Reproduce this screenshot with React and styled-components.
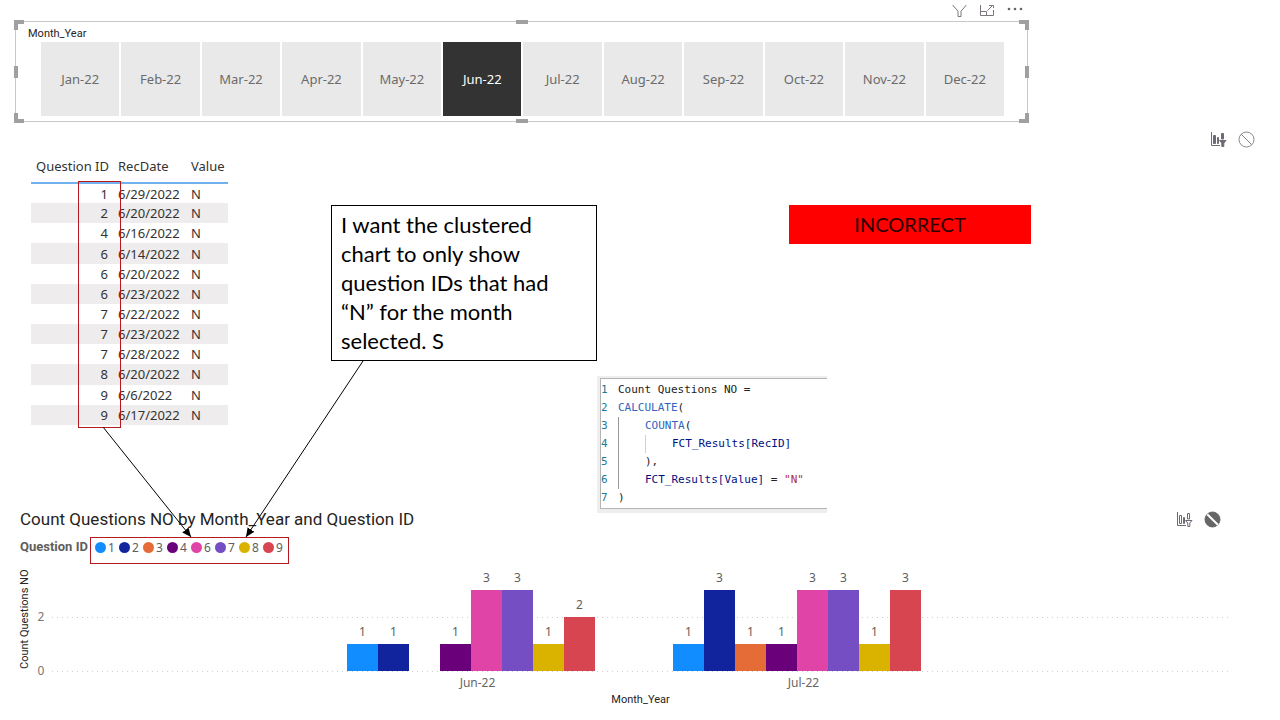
import React from 'react'
import { styled, createGlobalStyle } from 'styled-components'

const GlobalStyle = createGlobalStyle`
  body {
    margin: 0;
    background: #fff;
    font-family: 'Noto Sans', sans-serif;
  }
  * {
    box-sizing: border-box;
  }
`

const Page = styled.main`
  position: relative;
  min-height: 100vh;
`

const Toolbar = styled.div`
  display: flex;
  justify-content: flex-end;
  gap: ${p => p.$gap || 12}px;
`

const SlicerToolbar = styled(Toolbar)`
  padding: 2px 5px 2px 0;
`

const FilterToolbar = styled(Toolbar)`
  padding: 9px 25px 9px 0;
`

const IconButton = styled.button`
  display: flex;
  padding: 0;
  border: none;
  background: none;
  cursor: pointer;
`

const SlicerVisual = styled.section`
  margin: 0 252px 0 15px;
`

const SlicerFrame = styled.div`
  position: relative;
  padding: 3px 23px 5px 25px;
  border: 1px solid #c8c8c8;
`

const SlicerTitle = styled.h2`
  margin: 0 0 0 -13px;
  font: 400 11px/17px Roboto, sans-serif;
  color: #252423;
`

const Months = styled.div`
  display: grid;
  grid-template-columns: repeat(12, 1fr);
  gap: 2px;
`

const Month = styled.button`
  height: 74px;
  padding: 0;
  border: none;
  background: ${p => (p.$active ? '#333' : '#e9e9e9')};
  color: ${p => (p.$active ? '#fff' : '#6b6b6b')};
  font: 13px/20px 'Noto Sans', sans-serif;
  cursor: pointer;
`

const Corner = styled.span`
  position: absolute;
  width: 10px;
  height: 10px;
  border: 0 solid #a0a0a0;
  ${p => p.$v}: -2px;
  ${p => p.$h}: -2px;
  border-${p => p.$v}-width: 4px;
  border-${p => p.$h}-width: 4px;
`

const SideHandle = styled.span`
  position: absolute;
  top: calc(50% - 6px);
  ${p => p.$side}: -2px;
  width: 4px;
  height: 12px;
  background: #a0a0a0;
`

const EdgeHandle = styled.span`
  position: absolute;
  left: calc(50% - 6px);
  ${p => p.$side}: -2px;
  width: 12px;
  height: 4px;
  background: #a0a0a0;
`

const Middle = styled.div`
  display: grid;
  grid-template-columns: 300px 266px 192px 242px;
  row-gap: 15px;
  align-items: start;
  justify-content: start;
  padding: 0 31px;
`

const TableWrap = styled.div`
  position: relative;
  grid-row: 1 / 3;
  width: 197px;
`

const Table = styled.table`
  width: 100%;
  height: 268px;
  border-collapse: collapse;
  table-layout: fixed;
  font-size: 13px;
  line-height: 18px;
  color: #333;
`

const Th = styled.th`
  height: 26px;
  width: ${p => p.$width}px;
  padding: 0 5px 7px;
  border-bottom: 2px solid #73b1ee;
  font-weight: 400;
  text-align: ${p => (p.$num ? 'right' : 'left')};
  white-space: nowrap;
`

const Tr = styled.tr`
  &:nth-child(even) {
    background: #eeecec;
  }
`

const Td = styled.td`
  height: 20px;
  padding: 0 5px;
  text-align: ${p => (p.$num ? 'right' : 'left')};
`

const ColumnMark = styled.div`
  position: absolute;
  top: 24px;
  left: 47px;
  width: 43px;
  height: 247px;
  border: 1px solid #b5181d;
`

const Note = styled.p`
  margin: 48px 0 0;
  padding: 4px 9px 5px;
  border: 1px solid #000;
  background: #fff;
  font: 22px/29px Lato, sans-serif;
  color: #000;
`

const Verdict = styled.p`
  grid-column: 4;
  margin: 48px 0 0;
  padding: 5px 0;
  background: #f00;
  color: #2b0000;
  font: 20px/29px Lato, sans-serif;
  text-align: center;
`

const Editor = styled.div`
  grid-column: 3 / 5;
  width: 230px;
  padding: 2px 0 4px 3px;
  background: #efeeee;
`

const Code = styled.ol`
  margin: 0;
  padding: 2px 0 1px;
  border: 1px solid #b4b4b4;
  border-right: none;
  background: #fff;
  list-style: none;
  font: 11px/18px 'DejaVu Sans Mono', monospace;
  color: #222;
`

const CodeLine = styled.li`
  display: flex;
  height: 18px;
  white-space: pre;
`

const LineNumber = styled.span`
  width: 17px;
  color: #237893;
`

const Indent = styled.span`
  width: 27px;
  border-left: 1px solid ${p => p.$color || '#999'};
`

const Fn = styled.span`
  color: #3165bb;
`

const Ref = styled.span`
  color: #001080;
`

const Str = styled.span`
  color: #b5302f;
`

const ChartVisual = styled.section`
  padding: 0 51px 0 20px;
`

const ChartHead = styled.div`
  display: flex;
  align-items: center;
  justify-content: space-between;
  margin-top: -6px;
  padding-right: 8px;
`

const ChartTitle = styled.h2`
  margin: 0;
  font: 400 17px/24px Roboto, sans-serif;
  color: #252423;
`

const Legend = styled.div`
  display: flex;
  margin-top: 6px;
`

const LegendTitle = styled.span`
  width: 70px;
  font: 700 13px/20px Roboto, sans-serif;
  color: #605e5c;
`

const LegendItems = styled.ul`
  display: flex;
  margin: 0;
  height: 27px;
  padding: 0 0 0 4px;
  width: 199px;
  border: 1px solid #b5181d;
  list-style: none;
`

const LegendItem = styled.li`
  display: flex;
  align-items: center;
  gap: 2px;
  width: 24px;
  height: 19px;
  font-size: 12px;
  color: #605e5c;
`

const Dot = styled.span`
  width: 11px;
  height: 11px;
  border-radius: 50%;
  background: ${p => p.$color};
`

const ChartBody = styled.div`
  display: grid;
  grid-template-columns: 10px 22px 1fr;
  margin-top: 1px;
`

const YTitle = styled.div`
  writing-mode: vertical-rl;
  transform: rotate(180deg);
  font: 400 11px/10px Roboto, sans-serif;
  color: #252423;
  text-align: left;
  white-space: nowrap;
  padding-top: 3px;
`

const YTicks = styled.div`
  display: flex;
  flex-direction: column;
  justify-content: flex-end;
  align-items: center;
  gap: 36px;
  margin-bottom: -8px;
  font-size: 12px;
  line-height: 18px;
  color: #777;
`

const Plot = styled.div`
  display: flex;
  justify-content: center;
  height: 107px;
  padding-bottom: 1px;
  background:
    linear-gradient(90deg, #d0d0d0 1px, transparent 1px) 0 100% / 5px 1px repeat-x,
    linear-gradient(90deg, #d0d0d0 1px, transparent 1px) 0 calc(100% - 54px) / 5px 1px repeat-x;
`

const Group = styled.div`
  display: flex;
  align-items: flex-end;
  justify-content: center;
  width: 326px;
  padding-right: 13px;
`

const Column = styled.div`
  width: 31px;
  text-align: center;
  font-size: 12px;
  line-height: 16px;
  color: #605e5c;
`

const Bar = styled.div`
  height: ${p => p.$value * 27}px;
  margin-top: 4px;
  background: ${p => p.$color};
`

const XLabels = styled.div`
  grid-column: 3;
  display: flex;
  justify-content: center;
  padding-top: 2px;
  font-size: 12px;
  line-height: 18px;
  color: #666;
`

const XLabel = styled.span`
  width: 326px;
  text-align: center;
`

const XTitle = styled.div`
  grid-column: 3;
  font: 400 11px/16px Roboto, sans-serif;
  color: #252423;
  text-align: center;
`

const Arrows = styled.svg`
  position: absolute;
  top: 0;
  left: 0;
  pointer-events: none;
`

const months = ['Jan-22', 'Feb-22', 'Mar-22', 'Apr-22', 'May-22', 'Jun-22', 'Jul-22', 'Aug-22', 'Sep-22', 'Oct-22', 'Nov-22', 'Dec-22']

const records = [
  [1, '6/29/2022'],
  [2, '6/20/2022'],
  [4, '6/16/2022'],
  [6, '6/14/2022'],
  [6, '6/20/2022'],
  [6, '6/23/2022'],
  [7, '6/22/2022'],
  [7, '6/23/2022'],
  [7, '6/28/2022'],
  [8, '6/20/2022'],
  [9, '6/6/2022'],
  [9, '6/17/2022'],
]

const series = [
  { id: 1, color: '#118dff' },
  { id: 2, color: '#12239e' },
  { id: 3, color: '#e66c37' },
  { id: 4, color: '#6b007b' },
  { id: 6, color: '#e044a7' },
  { id: 7, color: '#744ec2' },
  { id: 8, color: '#d9b300' },
  { id: 9, color: '#d64550' },
]

const groups = [
  { month: 'Jun-22', values: [1, 1, 0, 1, 3, 3, 1, 2] },
  { month: 'Jul-22', values: [1, 3, 1, 1, 3, 3, 1, 3] },
]

const FunnelIcon = () => (
  <svg width="15" height="17" viewBox="0 0 15 17" fill="none" stroke="#7d7480" strokeWidth="1">
    <path d="M.6 3L6 9.2V14.5H9V9.2L14.4 3" />
  </svg>
)

const FocusIcon = () => (
  <svg width="16" height="17" viewBox="0 0 16 17" fill="none" stroke="#7d7480" strokeWidth="1">
    <path d="M1.5 3V13.5H14.5V8M1.5 9.5H7.5V13.5M8.5 8.5L14 3M10 3.5H14.5V6" />
  </svg>
)

const MoreIcon = () => (
  <svg width="16" height="17" viewBox="0 0 16 17" fill="#666">
    <circle cx="2" cy="7" r="1.3" />
    <circle cx="8" cy="7" r="1.3" />
    <circle cx="14" cy="7" r="1.3" />
  </svg>
)

const ChartFilterIcon = ({ solid }) => (
  <svg width="17" height="17" viewBox="0 0 17 17" fill={solid ? '#6f6974' : '#fff'} stroke="#6f6974" strokeWidth="1">
    <path d="M1.5 1V14.5H10" fill="none" />
    <path d="M3.5 4.5H5.5V12.5H3.5ZM7.5 6.5H8.5V12.5H7.5ZM11.5 2.5H13.5V8H11.5Z" />
    <path d="M9.5 9.5H16L13.8 12V15.5H11.8V12Z" />
  </svg>
)

const BlockIcon = ({ solid }) => (
  <svg width="17" height="17" viewBox="0 0 17 17">
    <circle cx="8.5" cy="8.5" r="7.5" fill={solid ? '#666' : 'none'} stroke={solid ? '#666' : '#888'} />
    <path d="M3.2 3.2L13.8 13.8" stroke={solid ? '#fff' : '#888'} strokeWidth={solid ? 2 : 1} />
  </svg>
)

export default function App() {
  return (
    <>
      <GlobalStyle />
      <Page>
        <SlicerVisual>
          <SlicerToolbar>
            <IconButton aria-label="Filters"><FunnelIcon /></IconButton>
            <IconButton aria-label="Focus mode"><FocusIcon /></IconButton>
            <IconButton aria-label="More options"><MoreIcon /></IconButton>
          </SlicerToolbar>
          <SlicerFrame>
            <SlicerTitle>Month_Year</SlicerTitle>
            <Months>
              {months.map(m => (
                <Month key={m} $active={m === 'Jun-22'} aria-pressed={m === 'Jun-22'}>{m}</Month>
              ))}
            </Months>
            <Corner $v="top" $h="left" />
            <Corner $v="top" $h="right" />
            <Corner $v="bottom" $h="left" />
            <Corner $v="bottom" $h="right" />
            <SideHandle $side="left" />
            <SideHandle $side="right" />
            <EdgeHandle $side="top" />
            <EdgeHandle $side="bottom" />
          </SlicerFrame>
        </SlicerVisual>

        <FilterToolbar $gap={11}>
          <IconButton aria-label="Filter"><ChartFilterIcon solid /></IconButton>
          <IconButton aria-label="None"><BlockIcon /></IconButton>
        </FilterToolbar>

        <Middle>
          <TableWrap>
            <Table>
              <thead>
                <tr>
                  <Th $num $width={82}>Question ID</Th>
                  <Th $width={73}>RecDate</Th>
                  <Th $width={42}>Value</Th>
                </tr>
              </thead>
              <tbody>
                {records.map(([id, date], i) => (
                  <Tr key={i}>
                    <Td $num>{id}</Td>
                    <Td>{date}</Td>
                    <Td>N</Td>
                  </Tr>
                ))}
              </tbody>
            </Table>
            <ColumnMark />
          </TableWrap>

          <Note>
            I want the clustered<br />
            chart to only show<br />
            question IDs that had<br />
            “N” for the month<br />
            selected. S
          </Note>
          <Verdict>INCORRECT</Verdict>

          <Editor>
            <Code>
              <CodeLine><LineNumber>1</LineNumber>Count Questions NO =</CodeLine>
              <CodeLine><LineNumber>2</LineNumber><Fn>CALCULATE</Fn>(</CodeLine>
              <CodeLine><LineNumber>3</LineNumber><Indent /><Fn>COUNTA</Fn>(</CodeLine>
              <CodeLine><LineNumber>4</LineNumber><Indent /><Indent $color="#d0d0d0" /><Ref>FCT_Results[RecID]</Ref></CodeLine>
              <CodeLine><LineNumber>5</LineNumber><Indent />),</CodeLine>
              <CodeLine><LineNumber>6</LineNumber><Indent /><Ref>FCT_Results[Value]</Ref> = <Str>"N"</Str></CodeLine>
              <CodeLine><LineNumber>7</LineNumber>)</CodeLine>
            </Code>
          </Editor>
        </Middle>

        <ChartVisual>
          <ChartHead>
            <ChartTitle>Count Questions NO by Month_Year and Question ID</ChartTitle>
            <Toolbar $gap={11}>
              <IconButton aria-label="Filter"><ChartFilterIcon /></IconButton>
              <IconButton aria-label="None"><BlockIcon solid /></IconButton>
            </Toolbar>
          </ChartHead>
          <Legend>
            <LegendTitle>Question ID</LegendTitle>
            <LegendItems>
              {series.map(s => (
                <LegendItem key={s.id}><Dot $color={s.color} />{s.id}</LegendItem>
              ))}
            </LegendItems>
          </Legend>
          <ChartBody>
            <YTitle>Count Questions NO</YTitle>
            <YTicks>
              <span>2</span>
              <span>0</span>
            </YTicks>
            <Plot>
              {groups.map(g => (
                <Group key={g.month}>
                  {g.values.map((v, i) => (
                    <Column key={series[i].id}>
                      {v > 0 && v}
                      <Bar $value={v} $color={series[i].color} />
                    </Column>
                  ))}
                </Group>
              ))}
            </Plot>
            <XLabels>
              {groups.map(g => <XLabel key={g.month}>{g.month}</XLabel>)}
            </XLabels>
            <XTitle>Month_Year</XTitle>
          </ChartBody>
        </ChartVisual>

        <Arrows width="400" height="560" stroke="#000" fill="none">
          <defs>
            <marker id="head" viewBox="0 0 9 8" refX="9" refY="4" markerWidth="9" markerHeight="8" markerUnits="userSpaceOnUse" orient="auto">
              <path d="M0 0L9 4L0 8Z" fill="#000" stroke="none" />
            </marker>
          </defs>
          <path d="M103 427L191 537" markerEnd="url(#head)" />
          <path d="M363 361L246 537" markerEnd="url(#head)" />
        </Arrows>
      </Page>
    </>
  )
}
